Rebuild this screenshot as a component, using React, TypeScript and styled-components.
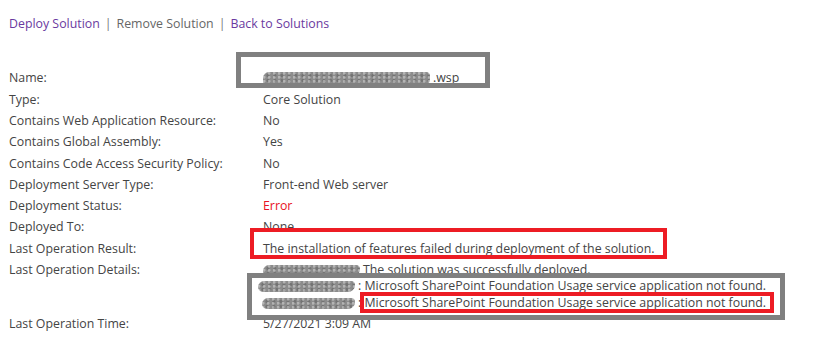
import React from 'react';
import styled, { createGlobalStyle } from 'styled-components';

const GlobalStyle = createGlobalStyle`
    html, body {
        margin: 0;
        padding: 0;
        background: #ffffff;
    }
    body {
        font-family: 'Open Sans', 'Noto Sans', sans-serif;
        font-size: 12.35px;
        color: #444444;
    }
`;

const Page = styled.div`
    position: relative;
    width: 817px;
    height: 347px;
    padding: 15px 0 0 9px;
    box-sizing: border-box;
    overflow: hidden;
`;

const Toolbar = styled.div`
    display: flex;
    align-items: center;
    gap: 5px;
    line-height: 18px;
`;

const ToolLink = styled.a<{ $disabled?: boolean }>`
    color: ${(p) => (p.$disabled ? '#666666' : '#6a3aa0')};
    text-decoration: none;
    cursor: ${(p) => (p.$disabled ? 'default' : 'pointer')};
`;

const Separator = styled.span`
    color: #777777;
`;

const Properties = styled.div`
    display: grid;
    grid-template-columns: 254px 1fr;
    margin-top: 35px;
`;

const Label = styled.div`
    padding: 2.4px 0;
    line-height: 16.5px;
    white-space: nowrap;
`;

const Value = styled.div<{ $error?: boolean }>`
    padding: 2.4px 0;
    line-height: 16.5px;
    white-space: nowrap;
    color: ${(p) => (p.$error ? '#e81123' : '#444444')};
`;

const Line = styled.div`
    display: flex;
    align-items: center;
    height: 16.5px;
`;

const Smudge = styled.span<{ $width: number; $height?: number; $offset?: number }>`
    display: inline-block;
    width: ${(p) => p.$width}px;
    height: ${(p) => p.$height ?? 11}px;
    margin-left: ${(p) => p.$offset ?? 0}px;
    margin-right: 3px;
    border-radius: 6px 4px 7px 5px;
    background:
        radial-gradient(circle at 20% 30%, rgba(255,255,255,0.35) 0 1px, transparent 2px) 0 0 / 5px 4px,
        radial-gradient(circle at 70% 70%, rgba(90,90,90,0.5) 0 1px, transparent 2px) 0 0 / 7px 5px,
        #8c8c8c;
    filter: blur(0.4px);
    flex: none;
`;

const Annotation = styled.div<{ $color: 'gray' | 'red'; $x: number; $y: number; $w: number; $h: number }>`
    position: absolute;
    left: ${(p) => p.$x}px;
    top: ${(p) => p.$y}px;
    width: ${(p) => p.$w}px;
    height: ${(p) => p.$h}px;
    box-sizing: border-box;
    border: ${(p) => (p.$color === 'red' ? '4.5px solid #ed1c24' : '5px solid #808080')};
    pointer-events: none;
`;

const rows: { label: string; value: string; error?: boolean }[] = [
    { label: 'Type:', value: 'Core Solution' },
    { label: 'Contains Web Application Resource:', value: 'No' },
    { label: 'Contains Global Assembly:', value: 'Yes' },
    { label: 'Contains Code Access Security Policy:', value: 'No' },
    { label: 'Deployment Server Type:', value: 'Front-end Web server' },
    { label: 'Deployment Status:', value: 'Error', error: true },
    { label: 'Deployed To:', value: 'None' },
    { label: 'Last Operation Result:', value: 'The installation of features failed during deployment of the solution.' },
];

export default function App() {
    return (
        <React.Fragment>
            <GlobalStyle />
            <Page>
                <Toolbar>
                    <ToolLink href="#">Deploy Solution</ToolLink>
                    <Separator>|</Separator>
                    <ToolLink $disabled>Remove Solution</ToolLink>
                    <Separator>|</Separator>
                    <ToolLink href="#">Back to Solutions</ToolLink>
                </Toolbar>
                <Properties>
                    <Label>Name:</Label>
                    <Value>
                        <Line>
                            <Smudge $width={167} $height={14} />
                            <span>.wsp</span>
                        </Line>
                    </Value>
                    {rows.map((row) => (
                        <React.Fragment key={row.label}>
                            <Label>{row.label}</Label>
                            <Value $error={row.error}>{row.value}</Value>
                        </React.Fragment>
                    ))}
                    <Label>Last Operation Details:</Label>
                    <Value>
                        <Line>
                            <Smudge $width={97} />
                            <span>The solution was successfully deployed.</span>
                        </Line>
                        <Line>
                            <Smudge $width={97} $offset={-5} />
                            <span>: Microsoft SharePoint Foundation Usage service application not found.</span>
                        </Line>
                        <Line>
                            <Smudge $width={93} $offset={-1} />
                            <span>: Microsoft SharePoint Foundation Usage service application not found.</span>
                        </Line>
                    </Value>
                    <Label>Last Operation Time:</Label>
                    <Value>5/27/2021 3:09 AM</Value>
                </Properties>
                <Annotation $color="gray" $x={236} $y={52} $w={254} $h={36} />
                <Annotation $color="red" $x={250} $y={228} $w={417} $h={31} />
                <Annotation $color="gray" $x={247} $y={273} $w={538} $h={47} />
                <Annotation $color="red" $x={360} $y={292} $w={414} $h={21} />
            </Page>
        </React.Fragment>
    );
}
